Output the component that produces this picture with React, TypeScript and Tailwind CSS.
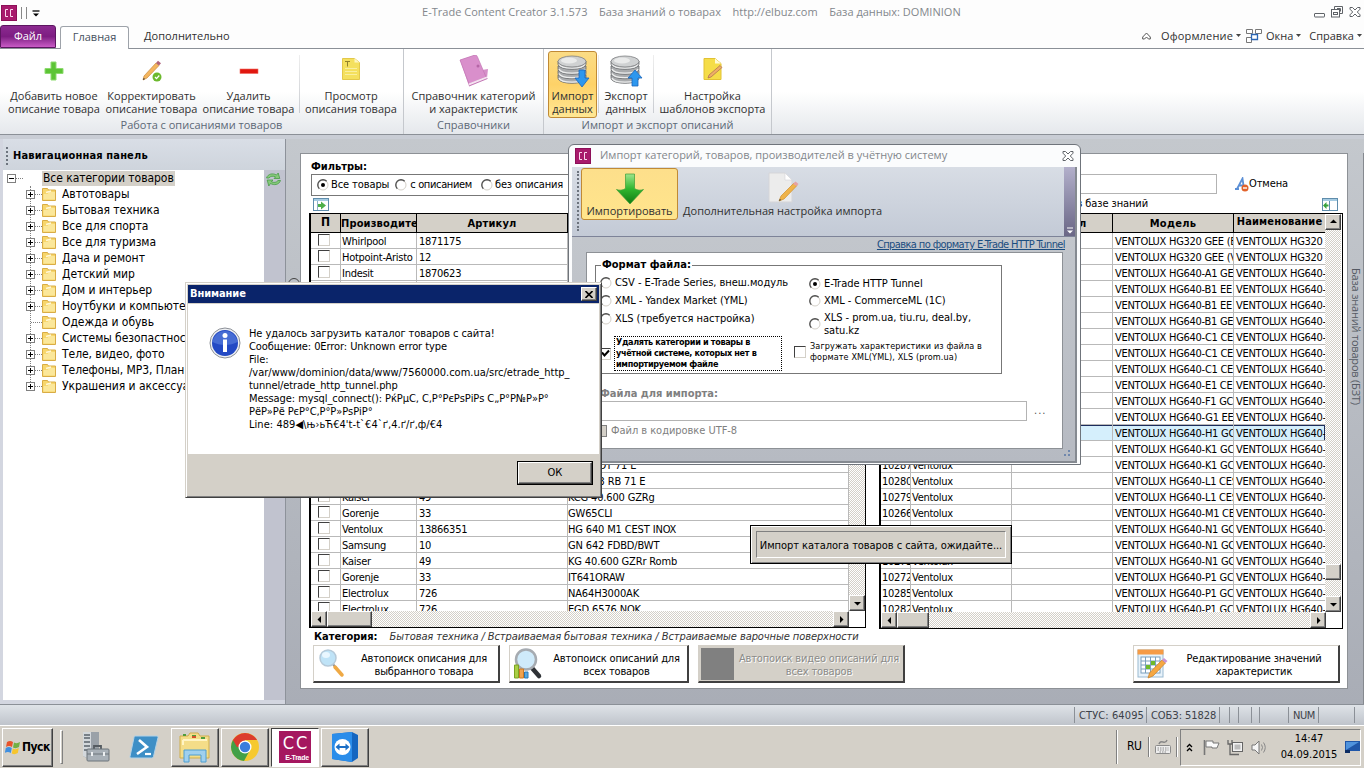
import type { ReactNode } from "react";
import { clsx } from "clsx";

const UI = "font-['DejaVu_Sans_Condensed','DejaVu_Sans',sans-serif]";
const RIBBON = "font-['Open_Sans','Noto_Sans',sans-serif]";
const RAISED =
  "border border-t-white border-l-white border-r-[#404040] border-b-[#404040] shadow-[inset_-1px_-1px_0_#808080] bg-[#d4d0c8]";

const categories = [
  { name: "Автотовары", leaf: false },
  { name: "Бытовая техника", leaf: false },
  { name: "Все для спорта", leaf: false },
  { name: "Все для туризма", leaf: false },
  { name: "Дача и ремонт", leaf: false },
  { name: "Детский мир", leaf: false },
  { name: "Дом и интерьер", leaf: false },
  { name: "Ноутбуки и компьюте", leaf: false },
  { name: "Одежда и обувь", leaf: true },
  { name: "Системы безопастнос", leaf: false },
  { name: "Теле, видео, фото", leaf: false },
  { name: "Телефоны, MP3, План", leaf: false },
  { name: "Украшения и аксессуа", leaf: false }
];

const products: [string, string, string][] = [
  ["Whirlpool", "1871175", ""],
  ["Hotpoint-Aristo", "12", ""],
  ["Indesit", "1870623", ""],
  ["", "", ""],
  ["", "", ""],
  ["", "", ""],
  ["", "", ""],
  ["", "", ""],
  ["", "", ""],
  ["", "", ""],
  ["", "", ""],
  ["", "", ""],
  ["", "", ""],
  ["", "", ""],
  ["", "", "KG PILOT 71 E"],
  ["", "", "KGG 63 RB 71 E"],
  ["Kaiser", "49", "KCG 40.600 GZRg"],
  ["Gorenje", "33", "GW65CLI"],
  ["Ventolux", "13866351", "HG 640 M1 CEST INOX"],
  ["Samsung", "10", "GN 642 FDBD/BWT"],
  ["Kaiser", "49", "KG 40.600 GZRr Romb"],
  ["Gorenje", "33", "IT641ORAW"],
  ["Electrolux", "726", "NA64H3000AK"],
  ["Electrolux", "726", "EGD 6576 NOK"]
];

// [id, model, name]
const knowledge: [string, string, string][] = [
  ["", "HG320 GEE (B", "HG320"],
  ["", "HG320 GEE (V", "HG320"],
  ["", "HG640-A1 GE", "HG640-"],
  ["", "HG640-B1 EE", "HG640-"],
  ["", "HG640-B1 EE", "HG640-"],
  ["", "HG640-B1 GEI", "HG640-"],
  ["", "HG640-C1 CE", "HG640-"],
  ["", "HG640-C1 CE", "HG640-"],
  ["", "HG640-C1 CE", "HG640-"],
  ["", "HG640-E1 CE", "HG640-"],
  ["", "HG640-F1 GC", "HG640-"],
  ["", "HG640-G1 EE", "HG640-"],
  ["", "HG640-H1 GC", "HG640-"],
  ["", "HG640-K1 GC", "HG640-"],
  ["10287", "HG640-K1 GC", "HG640-"],
  ["10280", "HG640-L1 CES", "HG640-"],
  ["10279", "HG640-L1 CES", "HG640-"],
  ["10266", "HG640-M1 CE", "HG640-"],
  ["10278", "HG640-N1 GC", "HG640-"],
  ["", "HG640-N1 GC", "HG640-"],
  ["10273", "HG640-N1 GC", "HG640-"],
  ["10272", "HG640-P1 GC", "HG640-"],
  ["10285", "HG640-P1 GC", "HG640-"],
  ["10282", "HG640-P1 GC", "HG640-"]
];

const SELECTED_ROW = 12;

/* ---------- icons ---------- */

const CcLogo = ({ size = 16 }: { size?: number }) => (
  <svg width={size} height={size} viewBox="0 0 16 16" className="shrink-0">
    <rect width="16" height="16" fill="#8d0f58" />
    <rect x="1" y="1" width="14" height="14" fill="#a81a6c" />
    <path d="M7 4.500H4.500v7H7M12 4.500H9.500v7H12" fill="none" stroke="#fbd9ee" strokeWidth="1" />
  </svg>
);

const PlusIcon = () => (
  <svg width="20" height="20" viewBox="0 0 20 20">
    <path d="M7 1h5v6.500h7v5h-7V19H7v-6.500H1v-5h6z" fill="#5cc435" stroke="#8edb70" />
  </svg>
);

const PencilCheckIcon = () => (
  <svg width="22" height="22" viewBox="0 0 22 22">
    <path d="M2 20l1-4L15 3l3 2.500L6 18z" fill="#f4b65f" stroke="#c98a3c" strokeWidth=".7" />
    <path d="M15 3l2-2.200 3 2.500L18 5.500z" fill="#b0637b" />
    <path d="M2 20l.6-2 1.500 1z" fill="#333" />
    <circle cx="16" cy="17" r="4.500" fill="#6cb92d" />
    <path d="M14 17l1.500 1.600L18.300 15.500" fill="none" stroke="#fff" strokeWidth="1.300" />
  </svg>
);

const MinusIcon = () => (
  <svg width="20" height="20" viewBox="0 0 20 20">
    <rect x="1" y="8" width="18" height="4.500" fill="#e0170f" stroke="#f0685f" strokeWidth=".6" />
  </svg>
);

const NoteIcon = () => (
  <svg width="20" height="24" viewBox="0 0 20 24" className="-mt-1">
    <path d="M1.500 1.500h12l5 4v17h-17z" fill="#f4e05e" stroke="#e3c84a" />
    <path d="M13.500 1.500v4h5z" fill="#fdf6c0" />
    <path d="M4 4.500h5M6.500 4.500v5" stroke="#93832c" />
    <path d="M4 11.500h12M4 14.500h12M4 17.500h12" stroke="#f9efa0" />
  </svg>
);

const BookIcon = () => (
  <svg width="30" height="32" viewBox="0 0 30 32">
    <path d="M1 5L16 0l7 15 6-1-1 9-18 8z" fill="#d58fc8" />
    <path d="M1 5L16 0q2 0 2.500 2L27 22l-17 7z" fill="#d98fcb" stroke="#c377b5" strokeWidth=".7" />
    <path d="M10 29.500l18-7" stroke="#f4e4f0" strokeWidth="2" />
    <path d="M10 31l18.500-7.500" stroke="#c377b5" />
    <circle cx="19" cy="11" r="1.500" fill="#b565a6" />
  </svg>
);

const DatabaseIcon = ({ up = false }: { up?: boolean }) => (
  <svg width="34" height="34" viewBox="0 0 34 34">
    {[24, 19.5, 15, 10].map((y) => (
      <g key={y}>
        <path d={`M2 ${y - 3}v3c0 7 28 7 28 0v-3z`} fill="#a9abad" stroke="#66686b" strokeWidth=".8" />
        <path d={`M3 ${y}c2 5.500 24 5.500 26 0`} fill="none" stroke="#eceded" strokeWidth="1.300" />
      </g>
    ))}
    <ellipse cx="16" cy="7.500" rx="14" ry="5.500" fill="#cfd1d2" stroke="#7d7f82" strokeWidth=".8" />
    <ellipse cx="13" cy="6.500" rx="8" ry="3" fill="#e9eaea" />
    <path
      d={up ? "M26 16l7 8h-4v8h-6v-8h-4z" : "M23 16h6v8h4l-7 9-7-9h4z"}
      fill="#2d97ee"
      stroke="#1a66ba"
      strokeWidth=".8"
    />
  </svg>
);

const TemplateIcon = () => (
  <svg width="22" height="24" viewBox="0 0 22 24" className="-mt-1">
    <path d="M2 1.500h11l6 5v16H2z" fill="#f5dd48" stroke="#e2c233" />
    <path d="M13 1.500v5h6z" fill="#fffbd5" />
    <path d="M6 21l1-3L18 8.500l2 2L9 20z" fill="#efae67" stroke="#a86b52" strokeWidth=".7" />
  </svg>
);

const GreenDownIcon = () => (
  <svg width="30" height="32" viewBox="0 0 30 32">
    <defs>
      <linearGradient id="gdown" x1="0" y1="0" x2="0" y2="1">
        <stop offset="0" stopColor="#9ee58c" />
        <stop offset=".5" stopColor="#2fb62e" />
        <stop offset="1" stopColor="#0f7a12" />
      </linearGradient>
    </defs>
    <path d="M10.500 1h9v14.500c3 2 6 2 9 1L15 31 1.500 16.500c3 1 6 1 9-1z" fill="url(#gdown)" stroke="#3c9c38" strokeWidth=".7" />
  </svg>
);

const PageEditIcon = () => (
  <svg width="32" height="32" viewBox="0 0 32 32">
    <path d="M2 1h16l7 7v22H2z" fill="#ececec" stroke="#d5d5d8" />
    <path d="M18 1v7h7z" fill="#fff" stroke="#d5d5d8" strokeWidth=".6" />
    <path d="M12 29l2-5L27 11l3 2.500L17 27z" fill="#efb34a" stroke="#cf8f2b" strokeWidth=".7" />
    <path d="M26 12l2.500-2.500 3 2.500-2 2z" fill="#e6a1a1" />
    <path d="M12 29l.8-2 1.500 1z" fill="#444" />
  </svg>
);

const FolderIcon = () => (
  <svg width="14" height="13" viewBox="0 0 14 13" className="shrink-0">
    <path d="M.5 12.500V.5h5l1 1.500h7v10.500z" fill="#f7d66b" stroke="#d9ac45" />
    <path d="M1.500 6h4l1.500-2h6v7.500h-11.500z" fill="#fbe79a" />
    <path d="M4 4.500l5-1.500" stroke="#fff7d6" strokeWidth="1.500" />
  </svg>
);

const RefreshIcon = () => (
  <svg width="17" height="15" viewBox="0 0 17 15">
    <path d="M1.500 6C3 1.500 8 1 11.500 3l1.700-2 1.600 5.500H9l1.600-1.600C8 3.800 5.500 4 4 6z" fill="#86c97a" stroke="#489c46" strokeWidth=".8" />
    <path d="M15.500 8.500C14 13 9 13.500 5.500 11.500L3.800 14 2.200 8H8l-1.600 1.600c2.600 1.400 5 1 6.600-1.100z" fill="#86c97a" stroke="#489c46" strokeWidth=".8" />
  </svg>
);

const PanelArrowIcon = ({ left = false }: { left?: boolean }) => (
  <svg width="16" height="14" viewBox="0 0 16 14">
    <rect x=".5" y=".5" width="15" height="12" fill="#fff" stroke="#5f8dac" />
    <rect x="1" y="1" width="14" height="2" fill="#a5cbe2" />
    {left ? (
      <>
        <path d="M7.500 3v9" stroke="#5f8dac" />
        <path d="M6.500 6.500H4.500V4L1 7.500 4.500 11V8.500h2z" fill="#37a23b" />
      </>
    ) : (
      <>
        <path d="M4.500 3v9" stroke="#8fb0c6" />
        <path d="M5 6h3V3.500l5 4-5 4V9H5z" fill="#4fb04a" />
      </>
    )}
  </svg>
);

const CancelIcon = () => (
  <svg width="15" height="15" viewBox="0 0 15 15">
    <path d="M1 12h4M8 12h3M3 12L8.500 1.500 10 12M5 8.500h5" fill="none" stroke="#5b8fd6" strokeWidth="1.800" />
    <circle cx="11" cy="11" r="3.500" fill="#e2632c" />
    <path d="M9 11h4" stroke="#fff" strokeWidth="1.400" />
  </svg>
);

const InfoIcon = () => (
  <svg width="32" height="32" viewBox="0 0 32 32">
    <circle cx="16" cy="16" r="15" fill="#eef0f3" stroke="#8c9097" />
    <circle cx="16" cy="16" r="13" fill="#2349c4" />
    <path d="M3.500 15a12.600 12.600 0 0125 0c-7 4-18 4-25 0z" fill="#5d83e0" opacity=".6" />
    <circle cx="16" cy="8.500" r="2.500" fill="#fff" />
    <path d="M14 12.500h4V25h-4z" fill="#fff" />
  </svg>
);

const MagnifierIcon = () => (
  <svg width="28" height="32" viewBox="0 0 28 32">
    <path d="M14 15l5 6" stroke="#8d949c" strokeWidth="2" />
    <path d="M17 19l7 8" stroke="#efa945" strokeWidth="3.500" strokeLinecap="round" />
    <circle cx="10" cy="10" r="8" fill="#bfe3f7" stroke="#b5c9d8" strokeWidth="1.500" />
    <ellipse cx="8" cy="7" rx="4" ry="3" fill="#e9f7ff" />
  </svg>
);

const MagnifierChartIcon = () => (
  <svg width="30" height="32" viewBox="0 0 30 32">
    <path d="M19 20l7 8" stroke="#2f3236" strokeWidth="4.500" strokeLinecap="round" />
    <circle cx="13" cy="11.500" r="10" fill="#cfeafa" stroke="#a6abb1" strokeWidth="2.500" />
    <path d="M1.500 17h4v13h-4z" fill="#a9cf45" stroke="#7ba324" />
    <path d="M6.500 21h4v9h-4z" fill="#f0a24d" stroke="#cf7a23" />
    <path d="M11.500 24h3.500v6h-3.500z" fill="#55a7e0" stroke="#2b78b5" />
  </svg>
);

const CalendarEditIcon = () => (
  <svg width="32" height="32" viewBox="0 0 32 32">
    <rect x="2" y="2" width="25" height="27" fill="#e8f3fb" stroke="#9ab9d0" />
    <rect x="1.500" y="1.500" width="26" height="5" fill="#f69b45" />
    <rect x="5" y="9" width="19" height="16" fill="#fff" stroke="#7ba0bd" />
    <path d="M9.500 9v16M14.500 9v16M19.500 9v16M5 13h19M5 17h19M5 21h19" stroke="#7ba0bd" />
    <path d="M15 13h4v4h-4zM10 17h4v4h-4z" fill="#6fbb2a" />
    <path d="M12 30l1.500-5L26 12l3.500 3L17 28z" fill="#f5a742" stroke="#c67c24" strokeWidth=".7" />
    <path d="M26 12l2-2 3.500 3-2 2z" fill="#c893d6" />
  </svg>
);

const CloseGlyph = () => (
  <svg width="12" height="10" viewBox="0 0 12 10">
    <path d="M1 .5h2.500L6 3 8.500.5H11v1.700L8.300 5 11 7.800v1.700H8.500L6 7 3.500 9.500H1V7.800L3.700 5 1 2.200z" fill="#fff" stroke="#5f6368" />
  </svg>
);

const WindowButtons = () => (
  <div className="flex items-end gap-[6px]">
    <svg width="11" height="12" viewBox="0 0 11 12">
      <rect x=".5" y="7.500" width="10" height="3.500" rx=".5" fill="#fff" stroke="#5f6368" />
    </svg>
    <svg width="12" height="12" viewBox="0 0 12 12">
      <path d="M3.500 3.500v-3h8v7h-3" fill="none" stroke="#5f6368" />
      <rect x=".5" y="3.500" width="8" height="7.500" fill="#fff" stroke="#5f6368" />
      <rect x="2.500" y="6.500" width="4" height="2" fill="none" stroke="#5f6368" />
      <path d="M6 2.500h3.500v3" fill="none" stroke="#5f6368" />
    </svg>
    <div className="pb-px">
      <CloseGlyph />
    </div>
  </div>
);

const Caret = ({ className }: { className: string }) => (
  <svg width="5" height="3" viewBox="0 0 5 3" className={clsx("mb-px shrink-0", className)}>
    <path d="M0 0h5L2.500 3z" fill="#444" />
  </svg>
);

/* ---------- ribbon ---------- */

const RibbonButton = ({
  icon,
  lines,
  width,
  active = false
}: {
  icon: ReactNode;
  lines: [string, string];
  width: string;
  active?: boolean;
}) => (
  <div
    className={clsx(
      "flex h-[67px] shrink-0 flex-col items-center rounded-[3px] border",
      width,
      active ? "border-[#c08a35] bg-linear-to-b from-[#fbdc85] via-[#fed268] to-[#ffe794]" : "border-transparent"
    )}
  >
    <div className="flex h-[37px] items-center justify-center">{icon}</div>
    <span className="whitespace-nowrap text-center leading-[13px]">
      {lines[0]}
      <br />
      {lines[1]}
    </span>
  </div>
);

const RibbonSeparator = () => <div className="mt-1 h-[58px] w-px bg-linear-to-b from-[#eee] to-[#c9ccd1]" />;

const RibbonGroup = ({ title, width, children }: { title: string; width: string; children: ReactNode }) => (
  <div className={clsx("flex h-[85px] shrink-0 flex-col border-r border-[#c5c8cd] pt-[2px]", width)}>
    <div className="flex">{children}</div>
    <div className="text-center leading-[14px] text-[#5c6876]">{title}</div>
  </div>
);

const Ribbon = () => (
  <header className={clsx(RIBBON, "text-[11px] text-[#303030]")}>
    <div className="flex h-6 items-center bg-[#fdfdfd] pl-[1px] pr-[3px]">
      <div className="flex w-[421px] items-center pt-[2px]">
        <CcLogo />
        <span className="ml-1 h-3 w-px bg-[#888]" />
        <span className="ml-1 h-3 w-px bg-[#888]" />
        <svg width="8" height="7" viewBox="0 0 8 7" className="ml-[5px]">
          <path d="M.5 1h7" stroke="#000" strokeWidth="1.300" />
          <path d="M1 3.500h6L4 6.500z" />
        </svg>
      </div>
      <div className="flex-1 whitespace-pre tracking-[0.02px] text-[#83878c]">
        {"E-Trade Content Creator 3.1.573    База знаний о товарах    http://elbuz.com    База данных: DOMINION"}
      </div>
      <WindowButtons />
    </div>

    <div className="flex h-[25px] items-stretch border-b border-[#8b9097] bg-[#fdfdfd]">
      <div className="mt-px flex w-14 items-center justify-center rounded-t-[3px] border border-[#5c1660] bg-linear-to-b from-[#8c2a90] via-[#7d1d82] to-[#c95bc6] text-white">
        Файл
      </div>
      <div className="relative top-px ml-1 mt-px flex w-[69px] items-center justify-center rounded-t-[3px] border border-b-0 border-[#9ea3aa] bg-white pb-px text-[#465160]">
        Главная
      </div>
      <div className="ml-[15px] flex items-center">Дополнительно</div>
      <div className="ml-auto flex items-center">
        <svg width="9" height="8" viewBox="0 0 9 8" className="mr-[10px]">
          <path d="M.7 5L4.500 1 8.300 5v2H6.500L4.500 5l-2 2H.7z" fill="#fff" stroke="#555" />
        </svg>
        <span className="tracking-[0.15px]">Оформление</span>
        <Caret className="ml-[3px] mr-[5px]" />
        <svg width="16" height="15" viewBox="0 0 16 15" className="mr-1">
          <path d="M.5.5h6v4h-6zM9.500.5h6v4h-6zM.5 8.500h5v5h-5z" fill="#fff" stroke="#777" />
          <path d="M5.500 5.500h6v5h-6z" fill="#fff" stroke="#2c66b4" strokeWidth="1.300" />
        </svg>
        Окна
        <Caret className="ml-[3px] mr-[8px]" />
        Справка
        <Caret className="ml-[3px] mr-[2px]" />
      </div>
    </div>

    <div className="flex h-[86px] border-b border-[#8b9097] bg-linear-to-b from-white via-white to-[#e5e8ec]">
      <RibbonGroup title="Работа с описаниями товаров" width="w-[404px]">
        <RibbonButton icon={<PlusIcon />} lines={["Добавить новое", "описание товара"]} width="ml-[5px] w-[98px]" />
        <RibbonButton icon={<PencilCheckIcon />} lines={["Корректировать", "описание товара"]} width="w-[97px]" />
        <RibbonButton icon={<MinusIcon />} lines={["Удалить", "описание товара"]} width="w-[97px]" />
        <span className="ml-0.5"><RibbonSeparator /></span>
        <RibbonButton icon={<NoteIcon />} lines={["Просмотр", "описания товара"]} width="w-[102px]" />
      </RibbonGroup>
      <RibbonGroup title="Справочники" width="w-[140px]">
        <RibbonButton icon={<BookIcon />} lines={["Справочник категорий", "и характеристик"]} width="w-[139px]" />
      </RibbonGroup>
      <RibbonGroup title="Импорт и экспорт описаний" width="w-[228px]">
        <RibbonButton active icon={<DatabaseIcon />} lines={["Импорт", "данных"]} width="ml-[4px] w-[49px]" />
        <span className="ml-px"><RibbonSeparator /></span>
        <RibbonButton icon={<DatabaseIcon up />} lines={["Экспорт", "данных"]} width="w-[54px]" />
        <RibbonSeparator />
        <RibbonButton icon={<TemplateIcon />} lines={["Настройка", "шаблонов экспорта"]} width="w-[117px]" />
      </RibbonGroup>
    </div>
  </header>
);

/* ---------- navigation ---------- */

const ExpandBox = ({ open = false }: { open?: boolean }) => (
  <svg width="9" height="9" viewBox="0 0 9 9" className="z-10 shrink-0">
    <rect x=".5" y=".5" width="8" height="8" fill="#fff" stroke="#808080" />
    <path d={open ? "M2 4.500h5" : "M2 4.500h5M4.500 2v5"} stroke="#000" />
  </svg>
);

const NavPanel = () => (
  <aside className="flex w-[286px] shrink-0 flex-col border-r border-[#8d929a] bg-[#d3d6e0] pl-[3px]">
    <div className={clsx(UI, "flex h-[31px] items-center bg-linear-to-b from-[#d9dee6] to-[#ced4dc] pt-[3px] text-[11px] font-bold tracking-[0.15px]")}>
      <span className="ml-[3px] mr-[5px] h-[18px] border-l-2 border-dotted border-[#6d747e]" />
      Навигационная панель
    </div>
    <div className="flex h-[530px]">
      <div className={clsx(UI, "w-[261px] overflow-hidden bg-white text-[12px] tracking-[-0.05px]")}>
        <div className="flex h-4 items-center pl-1">
          <ExpandBox open />
          <span className="w-[7px] border-t border-dotted border-[#808080]" />
          <span className="ml-[19px] flex h-[15px] items-center bg-[#d4d0c8] px-px">Все категории товаров</span>
        </div>
        <div className="relative">
          <span className="absolute left-[27px] top-0 h-[200px] border-l border-dotted border-[#808080]" />
          {categories.map((category) => (
            <div key={category.name} className="flex h-4 items-center whitespace-nowrap pl-[23px]">
              {category.leaf ? <span className="w-[9px]" /> : <ExpandBox />}
              <span className={clsx("border-t border-dotted border-[#808080]", category.leaf ? "-ml-1 w-[11px]" : "w-[7px]")} />
              <FolderIcon />
              <span className="ml-[6px]">{category.name}</span>
            </div>
          ))}
        </div>
      </div>
      <div className="flex flex-1 justify-center bg-[#c1c3cf] pr-[3px] pt-[2px]">
        <RefreshIcon />
      </div>
    </div>
  </aside>
);

/* ---------- classic controls ---------- */

const Radio = ({ checked = false }: { checked?: boolean }) => (
  <svg width="12" height="12" viewBox="0 0 12 12" className="shrink-0">
    <circle cx="6" cy="6" r="5" fill="#fff" stroke="#d4d0c8" />
    <path d="M2.300 9.700A5.200 5.200 0 019.700 2.300" fill="none" stroke="#505050" strokeWidth="1.300" />
    {checked && <circle cx="6" cy="6" r="2" />}
  </svg>
);

const CheckBox = ({ checked = false }: { checked?: boolean }) => (
  <span className="flex size-3 shrink-0 items-center justify-center border border-b-[#d4d0c8] border-l-[#404040] border-r-[#d4d0c8] border-t-[#404040] bg-white">
    {checked && (
      <svg width="9" height="9" viewBox="0 0 9 9">
        <path d="M1 3.500l2.500 3L8 1.500" fill="none" stroke="#000" strokeWidth="2" />
      </svg>
    )}
  </span>
);

const ARROWS = {
  up: "M4 8h7L7.500 4.500z",
  down: "M4 6h7L7.500 9.500z",
  left: "M9 4v7L5.500 7.500z",
  right: "M6 4v7l3.500-3.500z"
};

const ScrollButton = ({ dir }: { dir: keyof typeof ARROWS }) => (
  <span className={clsx(RAISED, "flex size-4 shrink-0 items-center justify-center")}>
    <svg width="15" height="15" viewBox="0 0 15 15" className="shrink-0">
      <path d={ARROWS[dir]} />
    </svg>
  </span>
);

const TRACK = "bg-[repeating-conic-gradient(#ffffff_0_25%,#d4d0c8_0_50%)] bg-[length:2px_2px]";

const HeaderCell = ({ width, children }: { width: string; children?: ReactNode }) => (
  <div className={clsx("shrink-0 overflow-hidden whitespace-nowrap border-b border-r border-black bg-[#d4d0c8] text-center", width)}>
    {children}
  </div>
);

const Cell = ({ width, children }: { width: string; children?: ReactNode }) => (
  <div className={clsx("shrink-0 overflow-hidden whitespace-nowrap border-b border-r border-[#b9b9b9] pt-px", width)}>
    {children}
  </div>
);

const ProductTable = () => (
  <div className="flex h-[415px] w-[557px] shrink-0 flex-col border border-black border-l-2 bg-white">
    <div className="flex h-[397px]">
      <div className="w-[538px] overflow-hidden">
        <div className="flex h-[19px] text-[11px] font-bold leading-[19px] tracking-[0.15px]">
          <HeaderCell width="w-[30px] text-[12px] leading-[17px]">П</HeaderCell>
          <HeaderCell width="w-[76px] text-left">Производите</HeaderCell>
          <HeaderCell width="w-[151px]">Артикул</HeaderCell>
          <HeaderCell width="w-[281px]" />
        </div>
        {products.map(([maker, code, model], index) => (
          <div key={index} className="flex h-4 leading-[16px]">
            <Cell width="w-[30px] pl-[7px]">
              <CheckBox />
            </Cell>
            <Cell width="w-[76px] pl-px">{maker}</Cell>
            <Cell width="w-[151px] pl-[2px]">{code}</Cell>
            <Cell width="w-[281px] pl-0 tracking-[-0.15px]">{model}</Cell>
          </div>
        ))}
      </div>
      <div className={clsx("flex w-4 flex-col justify-between", TRACK)}>
        <ScrollButton dir="up" />
        <ScrollButton dir="down" />
      </div>
    </div>
    <div className={clsx("flex h-4 w-[538px]", TRACK)}>
      <ScrollButton dir="left" />
      <span className={clsx(RAISED, "w-[45px]")} />
      <span className="ml-auto"><ScrollButton dir="right" /></span>
    </div>
  </div>
);

const KnowledgeTable = () => (
  <div className="flex h-[416px] w-[464px] shrink-0 flex-col border border-black border-l-2 bg-white">
    <div className="flex h-[398px]">
      <div className="w-[444px] overflow-hidden">
        <div className="flex h-[19px] text-[11px] font-bold leading-[19px] tracking-[0.15px]">
          <HeaderCell width="w-[30px]" />
          <HeaderCell width="w-[101px]" />
          <HeaderCell width="w-[101px]">Артикул</HeaderCell>
          <HeaderCell width="w-[121px] tracking-[0.3px]">Модель</HeaderCell>
          <HeaderCell width="w-[92px] leading-[16px]">Наименование</HeaderCell>
        </div>
        {knowledge.map(([id, model, name], index) => (
          <div
            key={index}
            className={clsx("flex h-4 leading-[16px]", index === SELECTED_ROW && "bg-[#d5effc] shadow-[inset_0_0_0_1px_#1c2c5c]")}
          >
            <Cell width="w-[30px] pl-px">{id}</Cell>
            <Cell width="w-[101px] pl-px">{id && "Ventolux"}</Cell>
            <Cell width="w-[101px]" />
            <Cell width="w-[121px] pl-[2px] tracking-[-0.27px]">VENTOLUX {model}</Cell>
            <Cell width="w-[92px] pl-[2px] tracking-[-0.27px]">VENTOLUX {name}</Cell>
          </div>
        ))}
      </div>
      <div className={clsx("flex w-4 flex-col", TRACK)}>
        <ScrollButton dir="up" />
        <span className={clsx(RAISED, "mt-auto h-4")} />
        <span className="mt-4"><ScrollButton dir="down" /></span>
      </div>
    </div>
    <div className={clsx("flex h-4 w-[445px]", TRACK)}>
      <ScrollButton dir="left" />
      <span className={clsx(RAISED, "w-8")} />
      <span className="ml-auto"><ScrollButton dir="right" /></span>
    </div>
  </div>
);

const ActionButton = ({
  icon,
  lines,
  width,
  disabled = false
}: {
  icon: ReactNode;
  lines: [string, string];
  width: string;
  disabled?: boolean;
}) => (
  <div
    className={clsx(
      "flex h-[38px] shrink-0 items-center border-b-2 border-l border-r-2 border-t border-b-[#404040] border-l-[#d4d0c8] border-r-[#404040] border-t-[#d4d0c8]",
      width,
      disabled ? "bg-[#d4d0c8] text-[#8b8b88] [text-shadow:1px_1px_0_#fff]" : "bg-white"
    )}
  >
    <div className="flex w-9 shrink-0 justify-center">{icon}</div>
    <span className="flex-1 whitespace-nowrap pt-[2px] text-center leading-[13px] tracking-[-0.15px]">
      {lines[0]}
      <br />
      {lines[1]}
    </span>
  </div>
);

const Workspace = () => (
  <main className="relative flex flex-1 bg-linear-to-b from-[#c4c8cd] to-[#a9adb6] pl-[14px] pt-[14px]">
    <span className="absolute left-[2px] top-[139px] size-[12px] rounded-full border border-[#444]" />
    <section className={clsx(UI, "flex h-[536px] w-[1048px] flex-col border border-[#8d9196] bg-white pl-[8px] text-[11px] tracking-[-0.27px]")}>
      <div className="flex h-[59px]">
        <div className="w-[571px] pl-[2px] pt-[6px]">
          <div className="font-bold leading-[14px] tracking-normal">Фильтры:</div>
          <div className="flex h-[22px] items-center border border-[#777] pl-[5px] tracking-[-0.1px]">
            <Radio checked />
            <span className="ml-[2px]">Все товары</span>
            <span className="ml-[6px]"><Radio /></span>
            <span className="ml-[3px] tracking-[-0.35px]">с описанием</span>
            <span className="ml-[9px]"><Radio /></span>
            <span className="ml-[2px] tracking-[-0.15px]">без описания</span>
          </div>
          <div className="ml-[2px] mt-[2px]"><PanelArrowIcon /></div>
        </div>
        <div className="w-[464px] pt-[20px]">
          <div className="flex">
            <div className="h-5 w-[337px] border border-[#b3b3b3]" />
            <div className="ml-[17px] flex items-center tracking-[-0.1px]">
              <CancelIcon />
              Отмена
            </div>
          </div>
          <div className="flex justify-between pl-[106px]">
            <span className="w-[162px] text-right leading-[19px] tracking-[-0.1px]">в базе знаний</span>
            <span className="mr-[6px] mt-[4px]"><PanelArrowIcon left /></span>
          </div>
        </div>
      </div>
      <div className="flex h-[415px] gap-[13px]">
        <ProductTable />
        <KnowledgeTable />
      </div>
      <div className="flex h-[17px] items-center pl-[5px] pt-px">
        <b className="tracking-[0px]">Категория:</b>
        <i className="ml-[12px] tracking-[-0.08px] text-[#333]">Бытовая техника / Встраиваемая бытовая техника / Встраиваемые варочные поверхности</i>
      </div>
      <div className="flex pl-[4px]">
        <ActionButton icon={<MagnifierIcon />} lines={["Автопоиск описания для", "выбранного товара"]} width="w-[187px]" />
        <ActionButton icon={<MagnifierChartIcon />} lines={["Автопоиск описаний для", "всех товаров"]} width="ml-[9px] w-[180px]" />
        <ActionButton
          disabled
          icon={<span className="h-8 w-[33px] bg-[#808080]" />}
          lines={["Автопоиск видео описаний для", "всех товаров"]}
          width="ml-[9px] w-[207px]"
        />
        <ActionButton icon={<CalendarEditIcon />} lines={["Редактирование значений", "характеристик"]} width="ml-[228px] w-[207px]" />
      </div>
    </section>
    <div className={clsx(RIBBON, "flex flex-1 justify-center border-r border-[#85898f] pt-[115px] text-[11px] leading-[14px] tracking-[-0.2px] text-[#555a63]")}>
      <span className="whitespace-nowrap [writing-mode:vertical-rl]">База знаний товаров (БЗТ)</span>
    </div>
  </main>
);

/* ---------- floating windows ---------- */

const Option = ({ label, checked = false }: { label: ReactNode; checked?: boolean }) => (
  <div className="flex items-center gap-[3px] leading-[13px]">
    <Radio checked={checked} />
    <span>{label}</span>
  </div>
);

const ImportDialog = () => (
  <div className="absolute left-[568px] top-[144px] flex h-[321px] w-[513px] flex-col rounded-t-[6px] border border-[#6f747b] bg-[#fbfcfd] px-[3px] pb-[3px]">
    <div className={clsx(RIBBON, "flex h-[22px] shrink-0 items-center pl-[3px] pr-[3px] text-[11px] text-[#83878c]")}>
      <CcLogo />
      <span className="ml-[9px] pb-px">Импорт категорий, товаров, производителей в учётную систему</span>
      <span className="ml-auto"><CloseGlyph /></span>
    </div>
    <div className="flex flex-1 flex-col border-b-2 border-r-2 border-[#858a91] bg-linear-to-b from-[#c6cacf] to-[#b6bac2]">
      <div className="flex h-[70px] border-b border-[#7d8398] bg-linear-to-b from-[#d8dde5] to-[#c3cad6]">
        <span className="ml-[5px] mt-1 h-[60px] border-l-2 border-dotted border-[#6d747e]" />
        <div className={clsx(RIBBON, "flex text-[11px] text-[#303030]")}>
          <div className="ml-[2px] mt-px flex h-[52px] w-[97px] flex-col items-center rounded-[3px] border border-[#c08a35] bg-linear-to-b from-[#fddf8b] to-[#ffe58c] pt-1">
            <GreenDownIcon />
            <span className="-mt-px leading-[14px]">Импортировать</span>
          </div>
          <div className="flex w-[209px] flex-col items-center pt-[5px]">
            <PageEditIcon />
            <span className="whitespace-nowrap leading-[14px]">Дополнительная настройка импорта</span>
          </div>
        </div>
        <div className="ml-auto flex w-[11px] flex-col justify-end bg-linear-to-b from-[#b3b0cb] to-[#6a6786] pb-[2px] pl-[3px]">
          <svg width="7" height="7" viewBox="0 0 7 7">
            <path d="M0 1h6" stroke="#fff" />
            <path d="M0 3.500h6L3 6.500z" fill="#fff" />
          </svg>
        </div>
      </div>
      <div className={clsx(UI, "flex-1 pl-[14px] pr-[12px] text-[11px] tracking-[-0.04px]")}>
        <div className="-mr-[2px] text-right leading-[15px] tracking-[-0.6px] text-[#1b4d80] underline">Справка по формату E-Trade HTTP Tunnel</div>
        <div className="relative h-[197px] border border-[#8d9196] bg-white pl-[8px]">
          <fieldset className="mt-[5px] h-[116px] w-[407px] border border-[#777] pt-0">
            <legend className="ml-[5px] px-px font-bold leading-[14px] tracking-normal">Формат файла:</legend>
            <div className="flex pl-[4px]">
              <div className="flex w-[209px] flex-col gap-[5px] pt-[4px]">
                <Option label="CSV - E-Trade Series, внеш.модуль" />
                <Option label="XML - Yandex Market (YML)" />
                <Option label="XLS (требуется настройка)" />
                <div className="-ml-px mt-[6px] flex items-center gap-[3px] text-[9px] font-bold leading-[11px] tracking-[-0.33px]">
                  <CheckBox checked />
                  <span className="h-[35px] w-[168px] whitespace-nowrap border border-dotted border-black pl-px">
                    Удалять категории и товары в
                    <br />
                    учётной системе, которых нет в
                    <br />
                    импортируемом файле
                  </span>
                </div>
              </div>
              <div className="flex flex-col gap-[4px] pt-[5px]">
                <Option checked label="E-Trade HTTP Tunnel" />
                <Option label="XML - CommerceML (1C)" />
                <Option
                  label={
                    <>
                      XLS - prom.ua, tiu.ru, deal.by,
                      <br />
                      satu.kz
                    </>
                  }
                />
                <div className="-ml-[15px] flex items-center gap-[4px] text-[9px] leading-[11px] tracking-[0.13px]">
                  <CheckBox />
                  <span>
                    Загружать характеристики из файла в
                    <br />
                    формате XML(YML), XLS (prom.ua)
                  </span>
                </div>
              </div>
            </div>
          </fieldset>
          <div className="ml-[5px] mt-[13px] font-bold leading-[14px] tracking-normal text-[#808080]">Файла для импорта:</div>
          <div className="flex items-center">
            <div className="h-5 w-[432px] border border-[#b3b3b3]" />
            <span className="ml-[7px] tracking-[1px] text-[#555]">...</span>
          </div>
          <div className="mt-[2px] flex items-center gap-[4px] text-[#808080]">
            <span className="size-3 border border-[#808080] bg-[#d4d0c8]" />
            Файл в кодировке UTF-8
          </div>
        </div>
      </div>
      <svg width="8" height="8" viewBox="0 0 8 8" className="mb-[4px] ml-auto mr-[4px]">
        <path d="M5 1h2v2H5zM5 5h2v2H5zM1 5h2v2H1z" fill="#6f87ad" />
      </svg>
    </div>
  </div>
);

const AlertDialog = () => (
  <div className="absolute left-[185px] top-[282px] flex h-[216px] w-[417px] flex-col border border-b-[#404040] border-l-[#d4d0c8] border-r-[#404040] border-t-[#d4d0c8] bg-[#d4d0c8] p-px shadow-[inset_1px_1px_0_#fff,inset_-1px_-1px_0_#808080]">
    <div className={clsx(UI, "m-px flex h-[18px] shrink-0 items-center bg-[#0a246a] pl-[2px] pr-[2px] text-[11px] font-bold tracking-[-0.1px] text-white")}>
      Внимание
      <span className={clsx(RAISED, "ml-auto flex h-[14px] w-4 items-center justify-center")}>
        <svg width="8" height="7" viewBox="0 0 8 7">
          <path d="M.5 0l7 7M7.500 0l-7 7" stroke="#000" strokeWidth="1.600" />
        </svg>
      </span>
    </div>
    <div className={clsx(UI, "mx-px flex h-[150px] shrink-0 bg-white pl-[21px] pt-[23px] text-[11px] leading-[13px] tracking-[-0.08px]")}>
      <InfoIcon />
      <div className="ml-[8px] whitespace-nowrap">
        <p>Не удалось загрузить каталог товаров с сайта!</p>
        <p>Сообщение: 0Error: Unknown error type</p>
        <p>File:</p>
        <p className="tracking-[0px]">/var/www/dominion/data/www/7560000.com.ua/src/etrade_http_</p>
        <p>tunnel/etrade_http_tunnel.php</p>
        <p>Message: mysql_connect(): РќРµС‚ С‚Р°РєРѕРіРѕ С„Р°Р№Р»Р°</p>
        <p>РёР»Рё РєР°С‚Р°Р»РѕРіР°</p>
        <p className="tracking-[0.05px]">Line: 489◀\њ›ьЋ€4't-t`€4`ґ‚4.ґ/ґ‚ф/€4</p>
      </div>
    </div>
    <div className="flex flex-1 justify-end pr-[7px] pt-[7px]">
      <div className="h-6 w-[76px] border border-black">
        <div className={clsx(RAISED, UI, "flex h-full items-center justify-center text-[11px]")}>ОК</div>
      </div>
    </div>
  </div>
);

const ProgressToast = () => (
  <div className="absolute left-[750px] top-[525px] h-[39px] w-[262px] border border-black bg-[#d4d0c8] p-[5px] shadow-[inset_1px_1px_0_#fff,inset_-1px_-1px_0_#808080]">
    <div className={clsx(UI, "flex h-full items-center justify-center whitespace-nowrap border border-b-white border-l-[#808080] border-r-white border-t-[#808080] pt-[4px] text-[11px] tracking-[-0.06px]")}>
      Импорт каталога товаров с сайта, ожидайте...
    </div>
  </div>
);

/* ---------- bottom bars ---------- */

const StatusBar = () => (
  <footer className={clsx(UI, "flex h-[21px] items-stretch justify-end border-t border-[#8b9097] bg-linear-to-b from-[#dfe3e8] to-[#bfc4cb] py-[2px] text-[11px] leading-[17px] tracking-[0.1px] text-[#3c4148]")}>
    <span className="w-[72px] border-l border-[#8b9097] pl-1">СТУС: 64095</span>
    <span className="w-[73px] border-l border-[#8b9097] pl-1 tracking-[-0.05px]">СОБЗ: 51828</span>
    <span className="w-[10px] border-l border-[#8b9097]" />
    <span className="w-[9px] border-l border-[#8b9097]" />
    <span className="w-[13px] border-l border-[#8b9097]" />
    <span className="w-[8px] border-l border-[#8b9097]" />
    <span className="w-[29px] border-l border-[#8b9097]" />
    <span className="w-[30px] border-l border-[#8b9097] pl-1 tracking-[-0.4px]">NUM</span>
    <span className="w-[36px] border-l border-[#8b9097]" />
    <span className="w-[10px] border-l border-[#8b9097]" />
  </footer>
);

const TaskButton = ({ active = false, children }: { active?: boolean; children: ReactNode }) => (
  <div
    className={clsx(
      "flex h-[39px] w-12 items-center justify-center",
      active ? "border border-b-white border-l-[#404040] border-r-white border-t-[#404040] bg-white" : RAISED
    )}
  >
    {children}
  </div>
);

const ServerIcon = () => (
  <svg width="30" height="32" viewBox="0 0 30 32">
    <path d="M2 1h16v28H9L2 25z" fill="#9aa1a8" />
    <path d="M2 1h8v28l-8-4z" fill="#d3d8dc" />
    <path d="M3 4h6M3 7h6M3 11h6M3 15h6M3 19h6" stroke="#5b636b" strokeWidth="1.300" />
    <path d="M13 18v-3h7v3" fill="none" stroke="#555b61" strokeWidth="1.800" />
    <rect x="6" y="18" width="22" height="12" rx="1" fill="#a8b0b7" stroke="#6c747b" />
    <path d="M6 23h22" stroke="#6c747b" />
    <path d="M11 21v4M23 21v4" stroke="#eceff1" strokeWidth="2" />
  </svg>
);

const PowerShellIcon = () => (
  <svg width="30" height="24" viewBox="0 0 30 24">
    <path d="M6 1h22q1.500 0 1 1.500l-4.500 19q-.5 1.500-2 1.500H2Q.5 23 1 21.500L5 2.500Q5 1 6 1z" fill="#3e8fc6" stroke="#b2d2e7" />
    <path d="M10 5l8 7-10 7" fill="none" stroke="#fff" strokeWidth="2.600" />
    <path d="M16 19h6" stroke="#fff" strokeWidth="2.200" />
  </svg>
);

const ExplorerIcon = () => (
  <svg width="34" height="32" viewBox="0 0 34 32">
    <path d="M2 27V5h8l2-3h8l2 3h9v22z" fill="#f4dd88" stroke="#cfae4c" />
    <path d="M5 9h24M5 9v5" stroke="#fff4c4" strokeWidth="2" />
    <path d="M5 4h3M14 5h4M23 7h4" stroke="#4f9d3d" strokeWidth="2" />
    <path d="M14 6h4" stroke="#d2502c" strokeWidth="2" />
    <path d="M6 31V19h22v12h-5v-7H11v7z" fill="#9fd0ee" stroke="#4f9ed0" />
  </svg>
);

const ChromeIcon = () => (
  <svg width="30" height="30" viewBox="0 0 30 30">
    <circle cx="15" cy="15" r="14" fill="#f6c92f" />
    <path d="M2.900 8A14 14 0 0014 29l6-11-5-3z" fill="#43a047" />
    <path d="M2.900 8A14 14 0 0127.100 8H15v7H7z" fill="#dc3c2d" />
    <circle cx="15" cy="15" r="6.500" fill="#fff" />
    <circle cx="15" cy="15" r="5.200" fill="#3b7ddd" />
  </svg>
);

const TeamViewerIcon = () => (
  <svg width="28" height="32" viewBox="0 0 28 32">
    <path d="M1 3l20-2 6 3v23l-6 4-20-3z" fill="#1566c0" />
    <path d="M1 3l20-2v30L1 28z" fill="#2a8dea" />
    <circle cx="11.500" cy="16" r="8" fill="#fff" />
    <path d="M4.500 16l4-3.500v2.500h6v-2.500l4 3.500-4 3.500V17h-6v2.500z" fill="#1b6fc6" />
  </svg>
);

const Taskbar = () => (
  <div className={clsx(UI, "flex h-[43px] items-center border-t border-white bg-[#d4d0c8] pl-[2px] text-[11px]")}>
    <div className={clsx(RAISED, "flex h-[39px] w-[51px] items-center pl-[2px] text-[12px] font-bold tracking-[-0.5px]")}>
      <svg width="16" height="16" viewBox="0 0 16 16" className="mr-px shrink-0">
        <path d="M2 3q3-2 6 0L7 8Q4 6 1 8z" fill="#e8532b" />
        <path d="M9 3.500q3 1.500 6-.5l-1 5q-3 2-6 .5z" fill="#72b043" />
        <path d="M.8 9q3-2 6 0l-1 5q-3-2-6 0z" fill="#3f8fe0" />
        <path d="M7.800 9.500q3 1.500 6-.5l-1 5q-3 2-6 .5z" fill="#f6c52e" />
      </svg>
      Пуск
    </div>
    <span className="ml-[7px] h-[34px] w-[3px] border border-b-[#808080] border-l-white border-r-[#808080] border-t-white" />
    <span className="ml-[18px]"><ServerIcon /></span>
    <span className="ml-[18px]"><PowerShellIcon /></span>
    <div className="ml-[12px] flex gap-[2px]">
      <TaskButton><ExplorerIcon /></TaskButton>
      <TaskButton><ChromeIcon /></TaskButton>
      <TaskButton active>
        <div className="flex size-8 flex-col items-center bg-[#a5175f] leading-none text-white">
          <span className="mt-[3px] pl-[2px] font-['Liberation_Sans_Narrow','DejaVu_Sans_Condensed',sans-serif] text-[18px] leading-[18px] tracking-[2px]">CC</span>
          <span className="mt-[2px] whitespace-nowrap pl-[4px] font-['Liberation_Sans_Narrow','Liberation_Sans',sans-serif] text-[7px] font-bold leading-[8px] tracking-[-0.3px]">
            E-Trade
          </span>
        </div>
      </TaskButton>
      <TaskButton><TeamViewerIcon /></TaskButton>
    </div>
    <div className="ml-auto flex h-full items-center">
      <span className="h-[34px] w-[2px] border-l border-r border-l-[#808080] border-r-white" />
      <span className="ml-[9px] w-[17px] pb-[2px] text-[12px] tracking-[-0.5px]">RU</span>
      <span className="ml-[4px] h-5 w-[2px] border-l border-r border-l-[#808080] border-r-white" />
      <svg width="17" height="16" viewBox="0 0 17 16" className="ml-[5px]">
        <path d="M4 5q1-3 4-2t4-2" fill="none" stroke="#888" strokeWidth="1.500" />
        <rect x=".5" y="6.500" width="15" height="8" rx="1" fill="#eee" stroke="#8a8a8a" />
        <path d="M2.500 9h11M2.500 11h11M4.500 13h7" stroke="#8a8a8a" strokeDasharray="1.500 1" />
      </svg>
      <span className="ml-[4px] h-5 w-[2px] border-l border-r border-l-[#808080] border-r-white" />
      <div className="ml-[2px] mr-[3px] flex h-[37px] w-[181px] items-center border border-b-white border-l-[#808080] border-r-white border-t-[#808080] pl-[5px]">
        <svg width="7" height="9" viewBox="0 0 7 9">
          <path d="M1 4l2.500-2.500L6 4M1 8l2.500-2.500L6 8" fill="none" stroke="#000" strokeWidth="1.300" />
        </svg>
        <svg width="17" height="17" viewBox="0 0 17 17" className="ml-[10px]">
          <path d="M1.500 1v15" stroke="#777" strokeWidth="1.600" />
          <path d="M3 2h7v2h6l-2 5H9V8H3z" fill="#fafafa" stroke="#777" />
        </svg>
        <svg width="17" height="17" viewBox="0 0 17 17" className="ml-[7px]">
          <rect x="5.500" y="3.500" width="10" height="9" fill="#f2f2f2" stroke="#666" />
          <rect x="7.500" y="5.500" width="6" height="5" fill="#bbb" />
          <path d="M1 1v4h4V1M3 5v10.500h9" fill="none" stroke="#666" strokeWidth="1.300" />
        </svg>
        <svg width="17" height="17" viewBox="0 0 17 17" className="ml-[7px]">
          <path d="M1 6h3l4-4v13l-4-4H1z" fill="#f6f6f6" stroke="#777" />
          <path d="M10.500 5.500q2 3 0 6M12.500 3.500q3.500 5 0 10" fill="none" stroke="#888" />
        </svg>
        <div className="ml-[12px] flex w-[58px] flex-col items-center text-[11px] leading-[16px] tracking-[0px]">
          <span>14:47</span>
          <span>04.09.2015</span>
        </div>
        <svg width="15" height="12" viewBox="0 0 15 12" className="ml-[7px]">
          <rect width="15" height="10" fill="#1f56a8" />
          <path d="M1 1h13L1 9z" fill="#4f93dd" />
          <rect y="9" width="5" height="3" fill="#0c2c63" />
        </svg>
      </div>
    </div>
  </div>
);

export default function App() {
  return (
    <div className="relative flex h-[768px] w-[1364px] flex-col overflow-hidden bg-[#d4d0c8] text-black">
      <Ribbon />
      <div className="flex h-[569px] border-t-4 border-[#c9cdd5]">
        <NavPanel />
        <Workspace />
      </div>
      <StatusBar />
      <Taskbar />
      <ImportDialog />
      <ProgressToast />
      <AlertDialog />
    </div>
  );
}
